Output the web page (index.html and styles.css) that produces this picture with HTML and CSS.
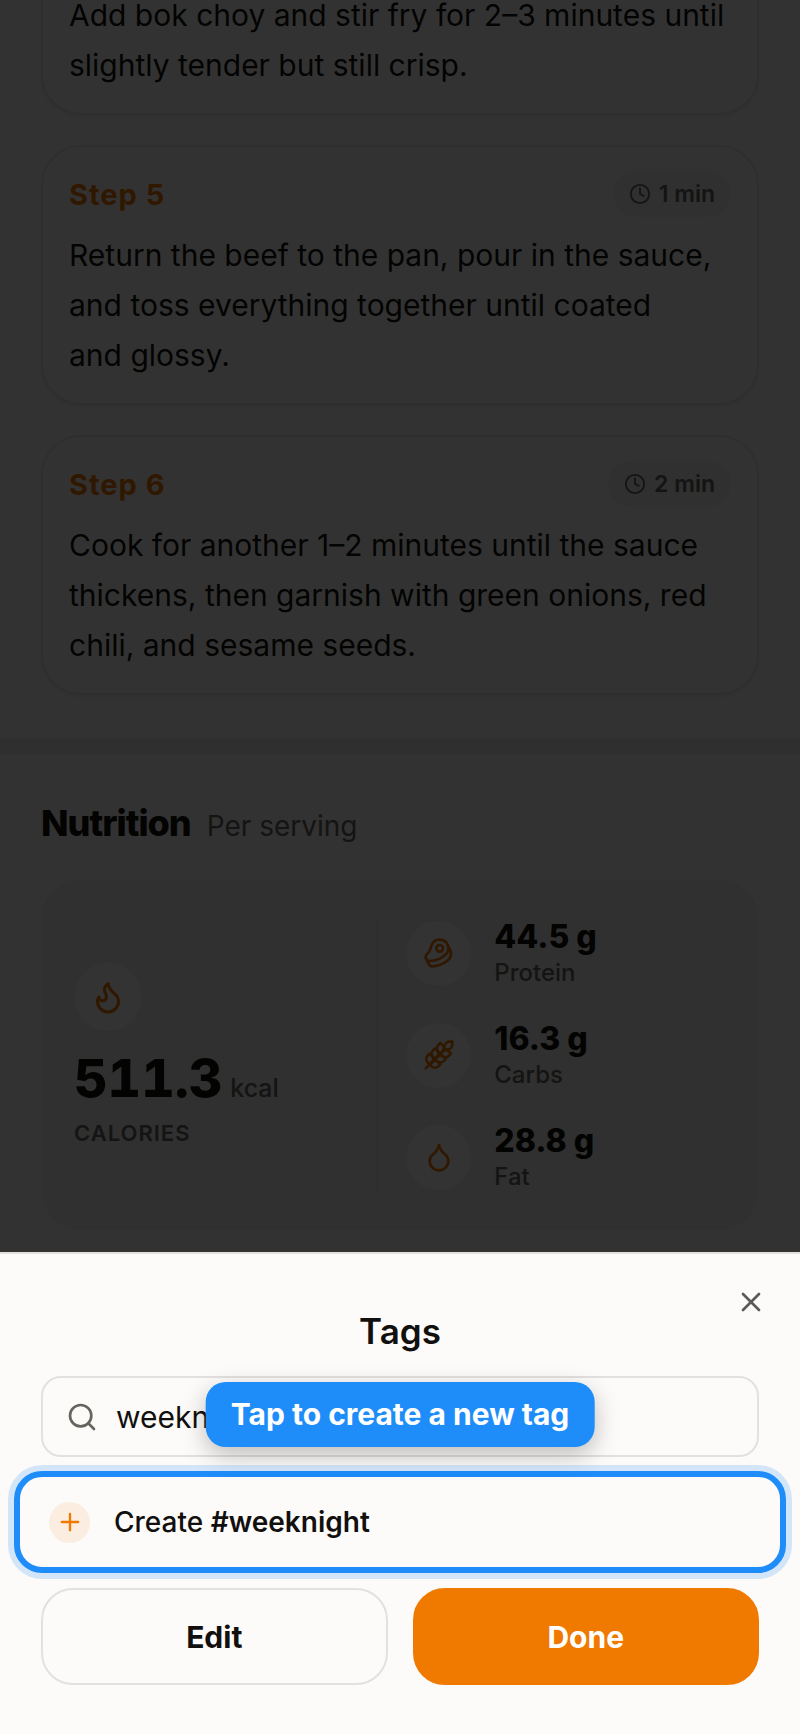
FILE: index.html
```html
<!DOCTYPE html>
<html lang="en">

<head>
    <meta charset="UTF-8" />
    <meta name="viewport" content="width=device-width, initial-scale=1.0" />
    <title>Recipe - Tags</title>
    <link rel="stylesheet" href="styles.css">
</head>

<body>
    <main class="recipe">
        <section class="steps">
            <article class="step step-scrolled">
                <p>Add bok choy and stir fry for 2–3 minutes until slightly tender but still crisp.</p>
            </article>

            <article class="step">
                <header class="step-header">
                    <h3>Step 5</h3>
                    <span class="duration">
                        <svg class="icon" viewBox="0 0 24 24"><circle cx="12" cy="12" r="10" /><path d="M12 6v6l4 2" /></svg>
                        1 min
                    </span>
                </header>
                <p>Return the beef to the pan, pour in the sauce, and toss everything together until coated and&nbsp;glossy.</p>
            </article>

            <article class="step">
                <header class="step-header">
                    <h3>Step 6</h3>
                    <span class="duration">
                        <svg class="icon" viewBox="0 0 24 24"><circle cx="12" cy="12" r="10" /><path d="M12 6v6l4 2" /></svg>
                        2 min
                    </span>
                </header>
                <p>Cook for another 1–2 minutes until the sauce thickens, then garnish with green onions, red chili, and sesame seeds.</p>
            </article>
        </section>

        <section class="nutrition">
            <div class="nutrition-title">
                <h2>Nutrition</h2>
                <span>Per serving</span>
            </div>

            <div class="nutrition-card">
                <div class="calories">
                    <span class="badge badge-large">
                        <svg class="icon" viewBox="0 0 24 24"><path d="M8.5 14.5A2.5 2.5 0 0 0 11 12c0-1.38-.5-2-1-3-1.072-2.143-.224-4.054 2-6 .5 2.5 2 4.9 4 6.5 2 1.6 3 3.5 3 5.5a7 7 0 1 1-14 0c0-1.153.433-2.294 1-3a2.5 2.5 0 0 0 2.5 2.5z" /></svg>
                    </span>
                    <div class="calories-value"><strong>511.3</strong><span>kcal</span></div>
                    <div class="calories-label">Calories</div>
                </div>

                <ul class="macros">
                    <li>
                        <span class="badge">
                            <svg class="icon" viewBox="0 0 24 24"><circle cx="12.5" cy="8.5" r="2.5" /><path d="M12.5 2a6.5 6.5 0 0 0-6.22 4.6c-1.1 3.13-.78 3.9-3.18 6.08A3 3 0 0 0 5 18c4 0 8.4-1.8 11.4-4.3A6.5 6.5 0 0 0 12.5 2Z" /><path d="m18.5 6 2.19 4.5a6.48 6.48 0 0 1 .31 2 6.49 6.49 0 0 1-2.6 5.2C15.4 20.2 11 22 7 22a3 3 0 0 1-2.68-1.66L2.4 16.5" /></svg>
                        </span>
                        <div>
                            <strong>44.5 g</strong>
                            <span class="macro-name">Protein</span>
                        </div>
                    </li>
                    <li>
                        <span class="badge">
                            <svg class="icon" viewBox="0 0 24 24"><path d="M2 22 16 8" /><path d="M3.47 12.53 5 11l1.53 1.53a3.5 3.5 0 0 1 0 4.94L5 19l-1.53-1.53a3.5 3.5 0 0 1 0-4.94Z" /><path d="M7.47 8.53 9 7l1.53 1.53a3.5 3.5 0 0 1 0 4.94L9 15l-1.53-1.53a3.5 3.5 0 0 1 0-4.94Z" /><path d="M11.47 4.53 13 3l1.53 1.53a3.5 3.5 0 0 1 0 4.94L13 11l-1.53-1.53a3.5 3.5 0 0 1 0-4.94Z" /><path d="M20 2h2v2a4 4 0 0 1-4 4h-2V6a4 4 0 0 1 4-4Z" /><path d="M11.47 17.47 13 19l-1.53 1.53a3.5 3.5 0 0 1-4.94 0L5 19l1.53-1.53a3.5 3.5 0 0 1 4.94 0Z" /><path d="M15.47 13.47 17 15l-1.53 1.53a3.5 3.5 0 0 1-4.94 0L9 15l1.53-1.53a3.5 3.5 0 0 1 4.94 0Z" /><path d="M19.47 9.47 21 11l-1.53 1.53a3.5 3.5 0 0 1-4.94 0L13 11l1.53-1.53a3.5 3.5 0 0 1 4.94 0Z" /></svg>
                        </span>
                        <div>
                            <strong>16.3 g</strong>
                            <span class="macro-name">Carbs</span>
                        </div>
                    </li>
                    <li>
                        <span class="badge">
                            <svg class="icon" viewBox="0 0 24 24"><path d="M12 22a7 7 0 0 0 7-7c0-2-1-3.9-3-5.5s-3.5-4-4-6.5c-.5 2.5-2 4.9-4 6.5S5 13 5 15a7 7 0 0 0 7 7z" /></svg>
                        </span>
                        <div>
                            <strong>28.8 g</strong>
                            <span class="macro-name">Fat</span>
                        </div>
                    </li>
                </ul>
            </div>
        </section>
    </main>

    <div class="overlay"></div>

    <section class="sheet" role="dialog" aria-labelledby="sheetTitle">
        <button type="button" class="close" aria-label="Close">
            <svg class="icon" viewBox="0 0 24 24"><path d="M18 6 6 18" /><path d="m6 6 12 12" /></svg>
        </button>

        <h2 id="sheetTitle">Tags</h2>

        <label class="search" for="tagSearch">
            <svg class="icon" viewBox="0 0 24 24"><circle cx="11" cy="11" r="8" /><path d="m21 21-4.3-4.3" /></svg>
            <input type="text" id="tagSearch" value="weeknight" aria-label="Search tags" />
        </label>

        <div class="create-wrap">
            <div class="tooltip" role="tooltip">Tap to create a new tag</div>
            <button type="button" class="create">
                <span class="plus">
                    <svg class="icon" viewBox="0 0 24 24"><path d="M5 12h14" /><path d="M12 5v14" /></svg>
                </span>
                <span>Create <b>#weeknight</b></span>
            </button>
        </div>

        <div class="actions">
            <button type="button" class="btn">Edit</button>
            <button type="button" class="btn btn-primary">Done</button>
        </div>
    </section>
</body>

</html>
```

FILE: styles.css
```css
* {
    box-sizing: border-box;
}

body {
    margin: 0;
    min-height: 100vh;
    font-family: Inter, sans-serif;
    font-size: 30px;
    color: #11100e;
    background-color: #fcfbf9;
    overflow: hidden;
}

h2,
h3,
p,
ul {
    margin: 0;
    padding: 0;
}

button,
input {
    font: inherit;
    color: inherit;
}

button {
    cursor: pointer;
}

.icon {
    width: 32px;
    height: 32px;
    flex-shrink: 0;
    fill: none;
    stroke: currentColor;
    stroke-width: 2;
    stroke-linecap: round;
    stroke-linejoin: round;
}

/* steps */
.steps {
    display: flex;
    flex-direction: column;
    gap: 30px;
    padding: 0 41px 43px;
    border-bottom: 16px solid #ececec;
}

.step {
    padding: 24px 26px 23px;
    border: 2px solid #e4e4e4;
    border-radius: 40px;
    box-shadow: 0 2px 4px rgba(0, 0, 0, 0.08);
}

/* first card is scrolled under the top edge */
.step-scrolled {
    margin-top: -10px;
    padding-top: 0;
    border-top: none;
    border-radius: 0 0 40px 40px;
}

.step p {
    line-height: 50px;
}

.step-header {
    display: flex;
    align-items: center;
    justify-content: space-between;
    margin-bottom: 13px;
}

.step-header h3 {
    font-size: 29px;
    font-weight: 700;
    letter-spacing: 1px;
    color: #f07a00;
}

.duration {
    display: flex;
    align-items: center;
    gap: 8px;
    height: 46px;
    padding: 0 16px;
    border-radius: 23px;
    font-size: 23px;
    font-weight: 600;
    color: #66645f;
    background-color: #efefef;
}

.duration .icon {
    width: 22px;
    height: 22px;
}

/* nutrition */
.nutrition {
    padding: 47px 41px 0;
}

.nutrition-title {
    display: flex;
    align-items: baseline;
    gap: 16px;
    margin-bottom: 32px;
    line-height: 44px;
}

.nutrition-title h2 {
    font-size: 36px;
    font-weight: 800;
    letter-spacing: -1px;
}

.nutrition-title span {
    font-size: 28px;
    color: #66645f;
}

.nutrition-card {
    display: grid;
    grid-template-columns: 7fr 8fr;
    padding: 37px 33px;
    border-radius: 40px;
    background-color: #efefef;
}

.badge {
    display: flex;
    align-items: center;
    justify-content: center;
    width: 65px;
    height: 65px;
    border-radius: 50%;
    color: #f07a00;
    background-color: #fcfcfc;
}

.badge-large {
    width: 68px;
    height: 68px;
}

.badge-large .icon {
    width: 36px;
    height: 36px;
}

.calories {
    display: flex;
    flex-direction: column;
    justify-content: center;
    border-right: 2px solid #e4e4e4;
}

.calories-value {
    display: flex;
    align-items: baseline;
    gap: 8px;
    margin: 20px 0 12px;
    line-height: 56px;
}

.calories-value strong {
    font-size: 52px;
    font-weight: 800;
    font-variant-numeric: tabular-nums;
}

.calories-value span {
    font-size: 25px;
    font-weight: 500;
    line-height: 28px;
    color: #66645f;
}

.calories-label {
    font-size: 22px;
    font-weight: 600;
    line-height: 28px;
    letter-spacing: 1px;
    text-transform: uppercase;
    color: #66645f;
}

.macros {
    display: flex;
    flex-direction: column;
    gap: 30px;
    padding-left: 28px;
    list-style: none;
}

.macros li {
    display: flex;
    align-items: center;
    gap: 23px;
}

.macros strong {
    display: block;
    font-size: 32px;
    font-weight: 800;
    line-height: 40px;
}

.macro-name {
    display: block;
    font-size: 24px;
    font-weight: 500;
    line-height: 32px;
    color: #66645f;
}

.overlay {
    position: fixed;
    inset: 0;
    background-color: rgba(0, 0, 0, 0.8);
}

/* tags sheet */
.sheet {
    position: fixed;
    left: 0;
    right: 0;
    bottom: 0;
    padding: 55px 41px 49px;
    border-top: 2px solid #e2e1df;
    background-color: #fcfbf9;
}

.sheet h2 {
    margin-bottom: 23px;
    font-size: 35px;
    font-weight: 600;
    line-height: 44px;
    text-align: center;
}

.close {
    position: absolute;
    top: 24px;
    right: 25px;
    display: flex;
    padding: 8px;
    border: none;
    color: #5c5a57;
    background: none;
}

.search {
    display: flex;
    align-items: center;
    gap: 18px;
    height: 81px;
    padding: 0 23px;
    border: 2px solid #e2e1df;
    border-radius: 20px;
}

.search .icon {
    color: #66645f;
}

.search input {
    flex: 1;
    min-width: 0;
    padding: 0;
    border: none;
    outline: none;
    background: none;
}

.create-wrap {
    position: relative;
    margin: 14px -27px 15px;
}

.create {
    display: flex;
    align-items: center;
    gap: 24px;
    width: 100%;
    height: 102px;
    padding: 0 29px;
    border: 6px solid #1e8df9;
    border-radius: 28px;
    box-shadow: 0 0 0 6px rgba(30, 141, 249, 0.18);
    font-size: 28px;
    font-weight: 500;
    background-color: #fcfbf9;
}

.create b {
    font-weight: 600;
}

.plus {
    display: flex;
    align-items: center;
    justify-content: center;
    width: 41px;
    height: 41px;
    border-radius: 50%;
    color: #f07a00;
    background-color: #fbede0;
}

.plus .icon {
    width: 28px;
    height: 28px;
}

.tooltip {
    position: absolute;
    left: 50%;
    bottom: 100%;
    margin-bottom: 24px;
    padding: 0 25px;
    border-radius: 20px;
    box-shadow: 0 8px 24px rgba(0, 0, 0, 0.25);
    font-weight: 700;
    line-height: 65px;
    white-space: nowrap;
    color: #fff;
    background-color: #1e8df9;
    transform: translateX(-50%);
}

.actions {
    display: grid;
    grid-template-columns: 1fr 1fr;
    gap: 25px;
}

.btn {
    height: 97px;
    border: 2px solid #e2e1df;
    border-radius: 32px;
    font-weight: 700;
    background-color: #fcfbf9;
}

.btn-primary {
    border-color: #f07a00;
    color: #fff;
    background-color: #f07a00;
}
```
